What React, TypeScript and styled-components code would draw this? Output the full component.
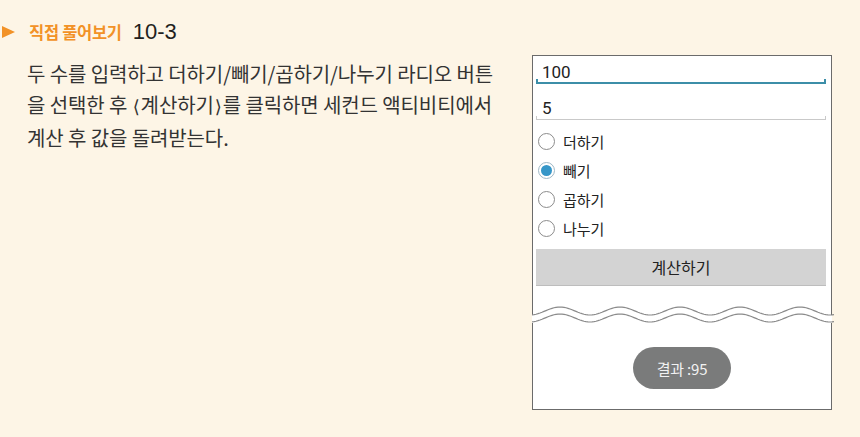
import React from "react";
import styled, { createGlobalStyle } from "styled-components";

const GlobalStyle = createGlobalStyle`
  html, body {
    margin: 0;
    padding: 0;
    background: #fdf5e6;
  }
  * {
    box-sizing: border-box;
  }
`;

const Page = styled.div`
  width: 860px;
  height: 437px;
  background: #fdf5e6;
  display: flex;
  font-family: "Noto Sans CJK KR", "Noto Sans", sans-serif;
  overflow: hidden;
`;

const LeftColumn = styled.div`
  flex: 1;
  padding: 20px 0 0 2px;
`;

const HeaderRow = styled.div`
  display: flex;
  align-items: center;
  height: 24px;
`;

const Arrow = styled.span`
  width: 0;
  height: 0;
  border-top: 6.5px solid transparent;
  border-bottom: 6.5px solid transparent;
  border-left: 13px solid #f29227;
`;

const Label = styled.span`
  margin-left: 14px;
  font-size: 16.5px;
  font-weight: 700;
  color: #f29227;
  letter-spacing: -0.3px;
`;

const Number = styled.span`
  margin-left: 11px;
  font-family: "Liberation Sans", Arial, sans-serif;
  font-size: 22px;
  color: #231f20;
`;

const Body = styled.div`
  margin-top: 14px;
  padding-left: 25px;
  font-size: 20px;
  line-height: 31px;
  color: #333;
  letter-spacing: -0.1px;
`;

const Line = styled.div`
  white-space: nowrap;
`;

const Bracket = styled.span`
  font-family: "DejaVu Sans", sans-serif;
  font-size: 18px;
  margin: 0 1px;
`;

const Frame = styled.div`
  width: 300px;
  margin: 55px 28px 0 0;
  display: flex;
  flex-direction: column;
  font-family: Roboto, "Noto Sans CJK KR", sans-serif;
  color: #222;
`;

const TopPanel = styled.div`
  height: 261px;
  background: #fff;
  border: 1px solid #6b6b6b;
  border-bottom: none;
  padding: 0 5px 0 3px;
`;

const Field = styled.div<{ $active?: boolean }>`
  position: relative;
  height: ${(p) => (p.$active ? "28px" : "36px")};
  padding: ${(p) => (p.$active ? "6px" : "14px")} 0 0 6px;
  line-height: 20px;
  font-size: 17px;
  border-bottom: ${(p) => (p.$active ? "2px solid #3c8ea8" : "1px solid #c9c9c9")};
  &::before,
  &::after {
    content: "";
    position: absolute;
    bottom: 0;
    width: ${(p) => (p.$active ? "2px" : "1px")};
    height: 3px;
    background: ${(p) => (p.$active ? "#3c8ea8" : "#c9c9c9")};
  }
  &::before {
    left: 0;
  }
  &::after {
    right: 0;
  }
`;

const RadioList = styled.div`
  margin-top: 7px;
  display: flex;
  flex-direction: column;
`;

const RadioRow = styled.div`
  height: 29px;
  display: flex;
  align-items: center;
  padding-left: 2px;
  font-family: "Noto Sans CJK KR", sans-serif;
  font-size: 15px;
  color: #222;
`;

const RadioCircle = styled.span<{ $checked?: boolean }>`
  width: 17px;
  height: 17px;
  border-radius: 50%;
  border: 1.3px solid ${(p) => (p.$checked ? "#9fb8c6" : "#8c8c8c")};
  display: flex;
  align-items: center;
  justify-content: center;
  margin-right: 8px;
  &::after {
    content: "";
    display: ${(p) => (p.$checked ? "block" : "none")};
    width: 11px;
    height: 11px;
    border-radius: 50%;
    background: #3596c8;
  }
`;

const CalcButton = styled.div`
  margin-top: 6px;
  height: 37px;
  background: #d3d3d3;
  border-bottom: 1px solid #bdbdbd;
  display: flex;
  align-items: center;
  justify-content: center;
  font-family: "Noto Sans CJK KR", sans-serif;
  font-size: 16px;
  color: #222;
`;

const WaveSvg = styled.svg`
  display: block;
  margin: -10px 0 -2px;
  overflow: visible;
`;

const BottomPanel = styled.div`
  height: 87px;
  background: #fff;
  border: 1px solid #6b6b6b;
  border-top: none;
  display: flex;
  justify-content: center;
  padding-top: 24px;
`;

const Toast = styled.div`
  width: 98px;
  height: 42px;
  border-radius: 21px;
  background: #7a7b7b;
  color: #f2f2f2;
  font-family: "Noto Sans CJK KR", sans-serif;
  font-size: 15px;
  display: flex;
  align-items: center;
  justify-content: center;
  letter-spacing: -0.2px;
`;

const wave = (offset: number, from: number, to: number) => {
  const pts: string[] = [];
  for (let x = from; x <= to; x += 2) {
    const y = offset + 4 * Math.cos((2 * Math.PI * (x - 58)) / 60);
    pts.push(`${x},${y.toFixed(2)}`);
  }
  return pts;
};

const WaveBreak = () => {
  // two parallel waves mark the cut between the activity screens
  const top = wave(5, 0, 302);
  const bottom = wave(12, 0, 302);
  const fill = [...wave(5, 0, 300), "300,19", "0,19"].join(" ");
  return (
    <WaveSvg width="300" height="19" viewBox="0 0 300 19">
      <polygon points={fill} fill="#fff" />
      <polyline points={top.join(" ")} fill="none" stroke="#8a8a8a" strokeWidth="1.2" />
      <polyline points={bottom.join(" ")} fill="none" stroke="#8a8a8a" strokeWidth="1.2" />
    </WaveSvg>
  );
};

const options = ["더하기", "빼기", "곱하기", "나누기"];

export default function App() {
  return (
    <Page>
      <GlobalStyle />
      <LeftColumn>
        <HeaderRow>
          <Arrow />
          <Label>직접 풀어보기</Label>
          <Number>10-3</Number>
        </HeaderRow>
        <Body>
          <Line>두 수를 입력하고 더하기/빼기/곱하기/나누기 라디오 버튼</Line>
          <Line>
            을 선택한 후 <Bracket>⟨</Bracket>계산하기<Bracket>⟩</Bracket>를 클릭하면 세컨드 액티비티에서
          </Line>
          <Line>계산 후 값을 돌려받는다.</Line>
        </Body>
      </LeftColumn>
      <Frame>
        <TopPanel>
          <Field $active>100</Field>
          <Field>5</Field>
          <RadioList>
            {options.map((o, i) => (
              <RadioRow key={o}>
                <RadioCircle $checked={i === 1} />
                {o}
              </RadioRow>
            ))}
          </RadioList>
          <CalcButton>계산하기</CalcButton>
        </TopPanel>
        <WaveBreak />
        <BottomPanel>
          <Toast>결과 :95</Toast>
        </BottomPanel>
      </Frame>
    </Page>
  );
}
